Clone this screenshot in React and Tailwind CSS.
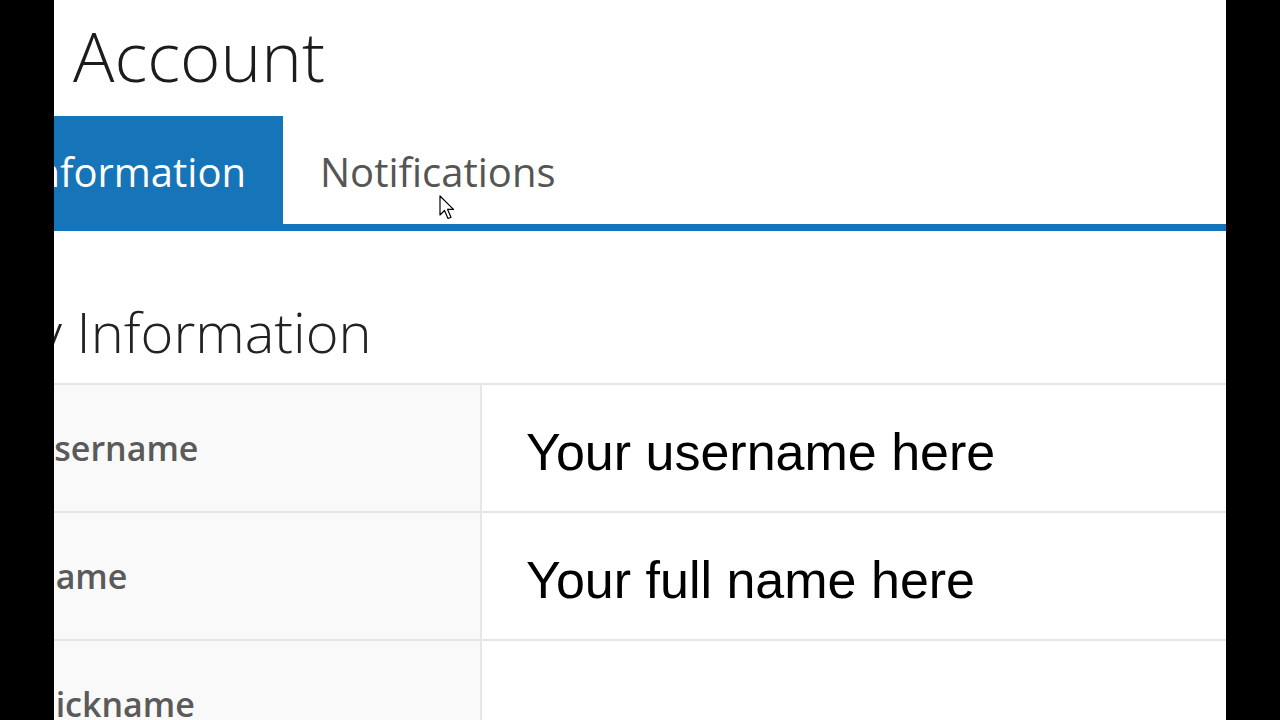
import React from "react";

const rows = [
  { label: "Username", value: "Your username here" },
  { label: "Name", value: "Your full name here" },
  { label: "Nickname", value: "" },
];

const Cursor = () => (
  <svg
    className="absolute left-[385px] top-[195px]"
    width="18"
    height="26"
    viewBox="0 0 18 26"
  >
    <path
      d="M1 1 L1 20 L5.5 15.5 L9 23.5 L12 22.2 L8.6 14.4 L14.5 14.4 Z"
      fill="#fff"
      stroke="#000"
      strokeWidth="1.2"
      strokeLinejoin="round"
    />
  </svg>
);

export default function App() {
  return (
    <div className="h-[720px] w-full overflow-hidden bg-black">
      <div
        className="relative mx-auto h-full w-[1172px] overflow-hidden bg-white"
        style={{ fontFamily: '"Open Sans", "Noto Sans", sans-serif' }}
      >
        {/* page title */}
        <div className="h-[116px] pl-[19px]">
          <h1 className="whitespace-nowrap text-[69px] font-light leading-[110px] text-[#1c1c1c]">
            Account
          </h1>
        </div>

        {/* tabs */}
        <div className="flex h-[108px]">
          <div className="flex w-[229px] shrink-0 justify-end bg-[#1675b9] pr-[37px] pt-[4px]">
            <span className="whitespace-nowrap text-[40px] leading-[104px] text-white">
              My Information
            </span>
          </div>
          <div className="pl-[37px] pt-[4px]">
            <span className="whitespace-nowrap text-[40px] leading-[104px] text-[#555]">
              Notifications
            </span>
          </div>
        </div>
        <div className="h-[7px] bg-[#1675b9]" />

        {/* section heading */}
        <div className="h-[152px] pt-[70px]">
          <h2 className="ml-[-66px] whitespace-nowrap text-[56px] font-light leading-[60px] text-[#222]">
            My Information
          </h2>
        </div>

        {/* details table */}
        <div className="border-t-2 border-[#e6e6e6]">
          {rows.map((r) => (
            <div key={r.label} className="flex h-[128px] border-b-2 border-[#e6e6e6]">
              <div className="w-[428px] shrink-0 border-r-2 border-[#e6e6e6] bg-[#f9f9f9]">
                <div className="ml-[-25px] whitespace-nowrap text-[34px] font-semibold leading-[126px] text-[#5a5a5a]">
                  {r.label}
                </div>
              </div>
              <div
                className="pl-[44px] pt-[10px] text-[52px] leading-[114px] text-black"
                style={{ fontFamily: '"Liberation Sans", Arial, sans-serif' }}
              >
                {r.value}
              </div>
            </div>
          ))}
        </div>

        <Cursor />
      </div>
    </div>
  );
}
